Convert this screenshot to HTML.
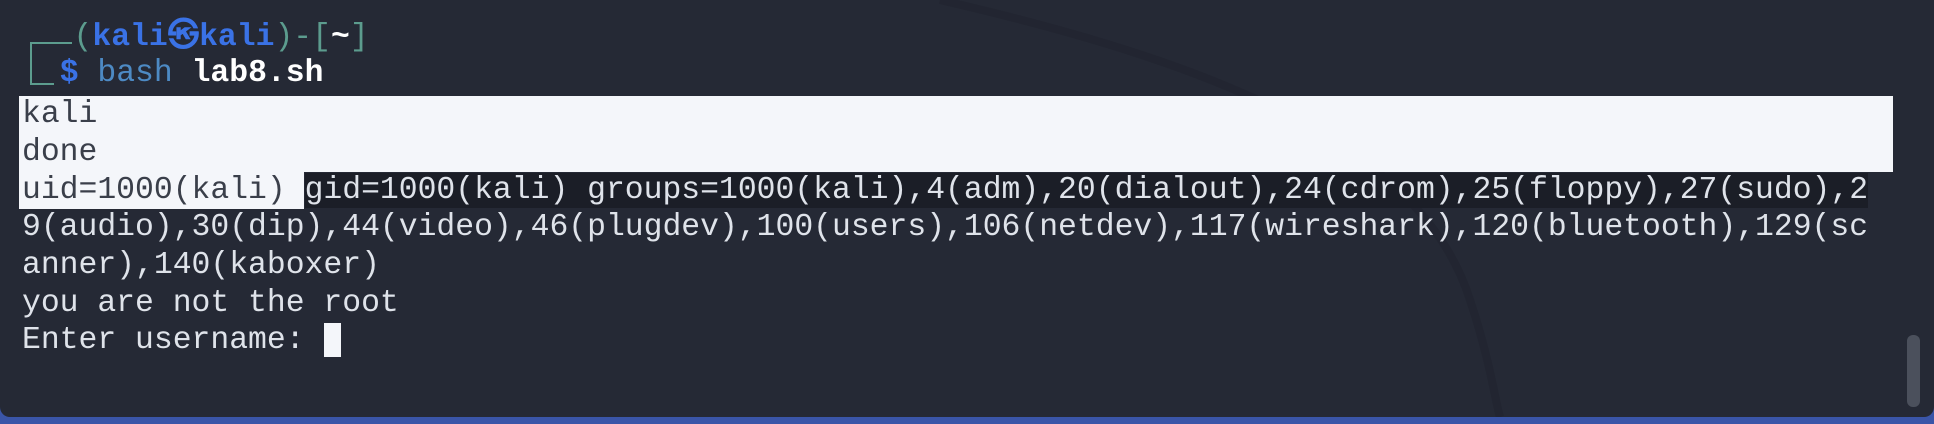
<!DOCTYPE html>
<html><head><meta charset="utf-8"><style>
html,body{margin:0;padding:0;width:1934px;height:424px;overflow:hidden;background:#3a55a8;}
#t{position:absolute;left:0;top:0;width:1934px;height:417px;background:#252935;border-radius:0 0 10px 10px;overflow:hidden;}
.l{position:absolute;left:22px;height:37.7px;line-height:37.7px;font-family:"Liberation Mono","DejaVu Sans Mono",monospace;font-size:31.4px;color:#dfe3ea;white-space:pre;}
.b{color:#3a72e6;font-weight:bold}
.g{color:#5c9c8e}
.w{color:#fff;font-weight:bold}
.c{color:#4d8ac4}
</style></head><body>
<div id="t">
<svg width="1934" height="417" style="position:absolute;left:0;top:0">
<path d="M940 0 C1200 60 1420 140 1470 300 C1490 360 1495 400 1500 417" stroke="#1f222c" stroke-width="8" fill="none" opacity="0.45"/>
</svg>
<div style="position:absolute;left:30px;top:42px;width:42px;height:2px;background:#5c9c8e"></div>
<div style="position:absolute;left:30px;top:42px;width:2px;height:43px;background:#5c9c8e"></div>
<div style="position:absolute;left:30px;top:83px;width:24px;height:2px;background:#5c9c8e"></div>
<div class="l" style="top:19px;left:17px">   <span class="g">(</span><span class="b">kali㉿kali</span><span class="g">)-[</span><span class="w">~</span><span class="g">]</span></div>
<div class="l" style="top:55px">  <span class="b">$</span> <span class="c">bash</span> <span class="w">lab8.sh</span></div>
<div style="position:absolute;left:19px;top:96px;width:1874px;height:76px;background:#f4f6fa"></div>
<div style="position:absolute;left:19px;top:172px;width:285px;height:37px;background:#f4f6fa"></div>
<div class="l" style="top:96px;color:#3a3f4a">kali</div>
<div class="l" style="top:134px;color:#3a3f4a">done</div>
<div class="l" style="top:171.5px"><span style="color:#3a3f4a">uid=1000(kali) </span><span style="background:#1b1e27">gid=1000(kali) groups=1000(kali),4(adm),20(dialout),24(cdrom),25(floppy),27(sudo),2</span></div>
<div class="l" style="top:209.2px">9(audio),30(dip),44(video),46(plugdev),100(users),106(netdev),117(wireshark),120(bluetooth),129(sc</div>
<div class="l" style="top:246.9px">anner),140(kaboxer)</div>
<div class="l" style="top:284.6px">you are not the root</div>
<div class="l" style="top:322.3px">Enter username: </div>
<div style="position:absolute;left:324px;top:323px;width:17px;height:34px;background:#f4f6fa"></div>
<div style="position:absolute;left:1907px;top:335px;width:13px;height:72px;background:#4b505c;border-radius:6px"></div>
</div>
</body></html>
